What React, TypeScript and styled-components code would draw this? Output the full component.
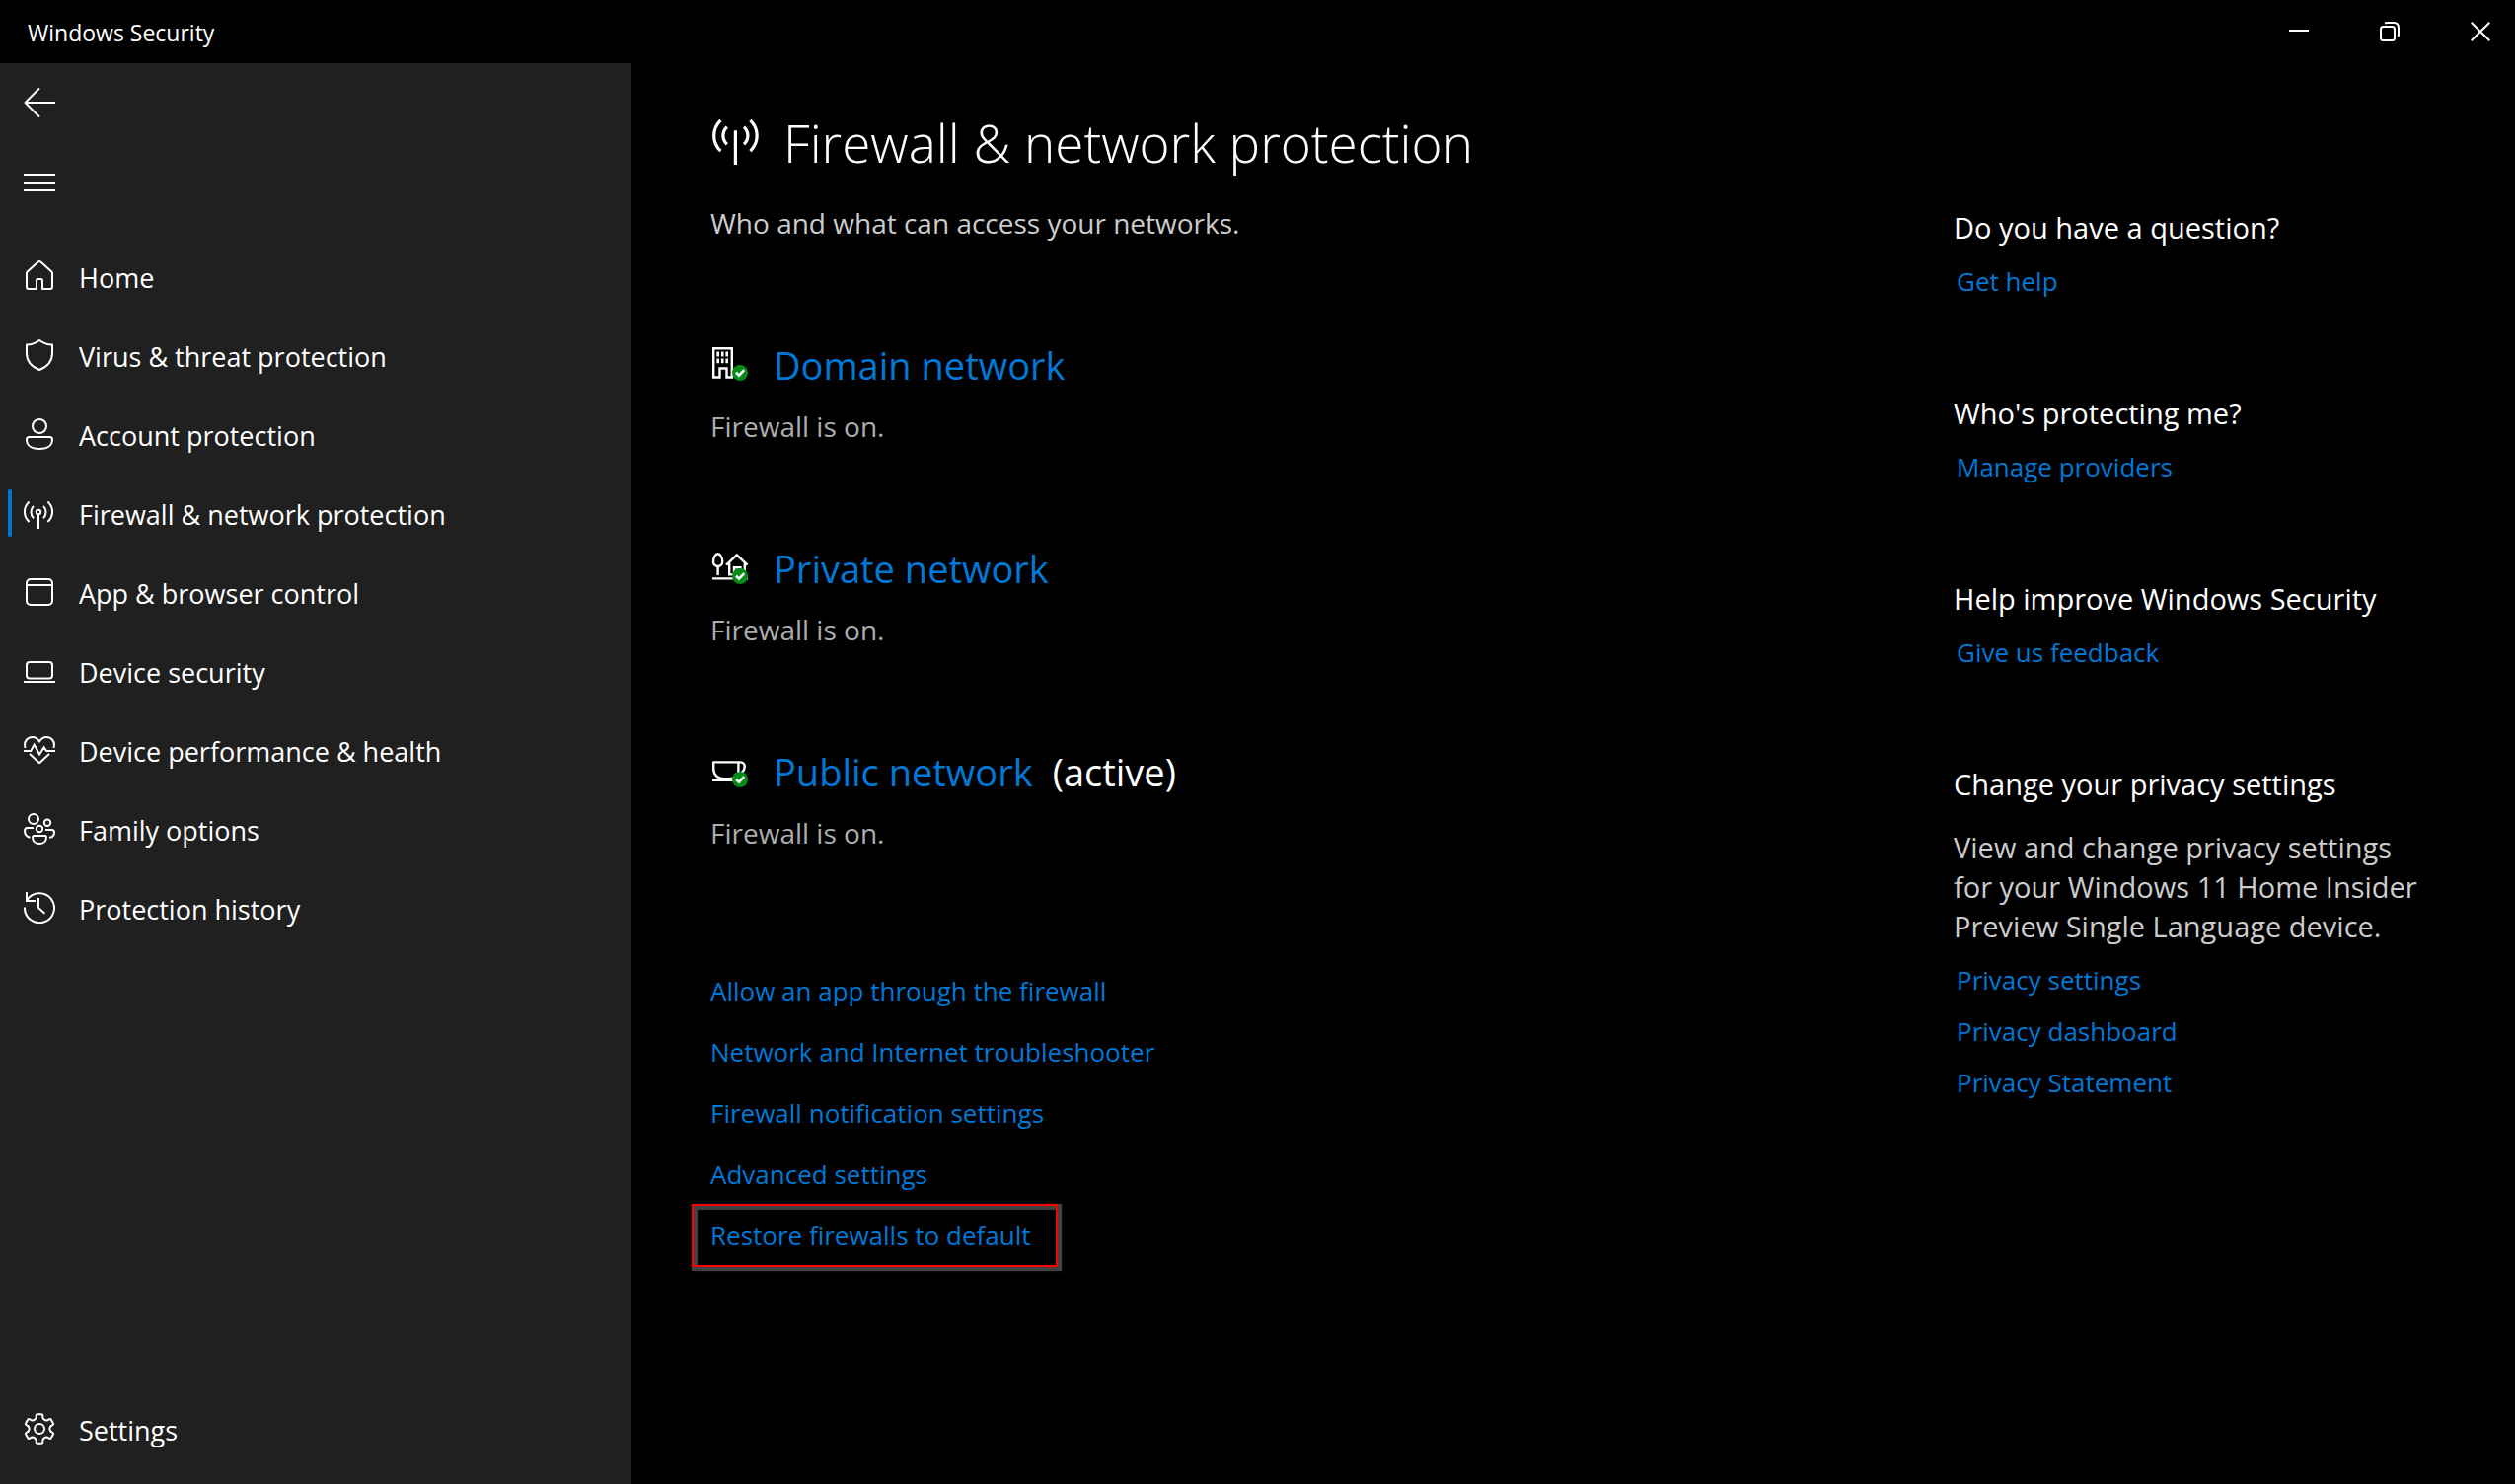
import React from "react";
import styled, { createGlobalStyle } from "styled-components";

const color = {
  window: "#000000",
  sidebar: "#202020",
  text: "#ffffff",
  soft: "#cccccc",
  muted: "#adadad",
  accent: "#0078d7",
  ok: "#078a18",
  marker: "#ff0000",
  markerShadow: "#424242",
};

const GlobalStyle = createGlobalStyle`
  *, *::before, *::after { box-sizing: border-box; }
  body {
    margin: 0;
    background: ${color.window};
    color: ${color.text};
    font-family: "Open Sans", "Noto Sans", sans-serif;
    font-size: 28px;
    line-height: 40px;
  }
  h1, h2, p, ul { margin: 0; padding: 0; font-weight: 400; }
  ul { list-style: none; }
`;

/* ---------- Shell ---------- */

const Window = styled.div`
  display: flex;
  flex-direction: column;
  min-height: 100vh;
`;

const TitleBar = styled.header`
  display: flex;
  align-items: center;
  justify-content: space-between;
  height: 64px;
  padding: 0 11px 0 28px;
`;

const WindowTitle = styled.span`
  padding-top: 2px;
  font-size: 23px;
`;

const WindowControls = styled.div`
  display: flex;
  gap: 44px;
`;

const IconButton = styled.button<{ $width: number; $height: number }>`
  display: flex;
  align-items: center;
  justify-content: center;
  width: ${(p) => p.$width}px;
  height: ${(p) => p.$height}px;
  padding: 0;
  border: 0;
  background: transparent;
  color: inherit;
`;

const Body = styled.div`
  display: flex;
  flex: 1;
`;

const Sidebar = styled.nav`
  display: flex;
  flex-direction: column;
  flex: 0 0 640px;
  padding-bottom: 16px;
  background: ${color.sidebar};
`;

const NavList = styled.ul`
  flex: 1;
  padding-top: 16px;
`;

const NavLink = styled.a`
  position: relative;
  display: flex;
  align-items: center;
  gap: 24px;
  height: 80px;
  padding-left: 24px;
  color: ${color.text};
  font-size: 27px;
  text-decoration: none;

  &[aria-current="page"]::before {
    content: "";
    position: absolute;
    left: 8px;
    top: 16px;
    width: 4px;
    height: 48px;
    border-radius: 2px;
    background: ${color.accent};
  }
`;

const NavLabel = styled.span`
  padding-top: 4px;
`;

const Svg = styled.svg`
  flex: none;
  fill: none;
  stroke: currentColor;
  stroke-width: 2;
  stroke-linecap: butt;
  stroke-linejoin: round;
`;

/* ---------- Content ---------- */

const Main = styled.main`
  display: flex;
  flex: 1;
  padding: 40px 80px;
`;

const Primary = styled.div`
  flex: 1;
`;

const PageTitle = styled.h1`
  display: flex;
  align-items: center;
  gap: 24px;
  height: 80px;
  font-size: 53px;
  font-weight: 300;
  line-height: 80px;
`;

const PageTitleText = styled.span`
  padding-top: 2px;
`;

const Subtitle = styled.p`
  margin-top: 22px;
  color: ${color.soft};
`;

const Network = styled.section`
  margin-top: 96px;
`;

const NetworkTitle = styled.h2`
  display: flex;
  align-items: center;
  font-size: 38px;
  line-height: 56px;
`;

const NetworkLink = styled.a`
  margin-left: 24px;
  color: ${color.accent};
  text-decoration: none;
`;

const NetworkState = styled.span`
  margin-left: 20px;
`;

const Status = styled.p`
  margin-top: 14px;
  color: ${color.muted};
`;

const LinkList = styled.ul<{ $gap: number; $top: number }>`
  display: flex;
  flex-direction: column;
  align-items: flex-start;
  gap: ${(p) => p.$gap}px;
  margin-top: ${(p) => p.$top}px;
`;

const TextLink = styled.a<{ $marked?: boolean }>`
  position: relative;
  display: block;
  color: ${color.accent};
  font-size: 26px;
  text-decoration: none;

  &::after {
    content: ${(p) => (p.$marked ? '""' : "none")};
    position: absolute;
    inset: -12px -28px -12px -19px;
    border: 2px solid ${color.marker};
    box-shadow: 2px 2px 1px 2px ${color.markerShadow},
      inset 4px 4px 1px ${color.markerShadow};
    pointer-events: none;
  }
`;

const Aside = styled.aside`
  display: flex;
  flex-direction: column;
  flex: 0 0 489px;
  gap: 94px;
  padding-top: 107px;
  font-size: 29px;
`;

const AsideTitle = styled.h2`
  font-size: 29px;
`;

const AsideLinks = styled(LinkList)`
  padding-left: 3px;
`;

const AsideText = styled.p`
  max-width: 480px;
  margin-top: 24px;
  color: ${color.soft};
`;

/* ---------- Icons ---------- */

const gearPath = (() => {
  const at = (deg: number, r: number) => {
    const a = (deg * Math.PI) / 180;
    return `${(16 + r * Math.cos(a)).toFixed(2)} ${(16 + r * Math.sin(a)).toFixed(2)}`;
  };
  let d = "";
  for (let i = 0; i < 6; i++) {
    const c = -90 + i * 60;
    d += `${i ? "L" : "M"}${at(c - 18, 11.4)} L${at(c - 13, 14.4)} Q${at(c - 12, 15.2)} ${at(c - 8, 15)} `;
    d += `L${at(c + 8, 15)} Q${at(c + 12, 15.2)} ${at(c + 13, 14.4)} L${at(c + 18, 11.4)} Q${at(c + 30, 9.6)} ${at(c + 42, 11.4)} `;
  }
  return d + "Z";
})();

const drawings = {
  back: <path d="M16 1.5 1.5 16 16 30.5M1.5 16H32" />,
  menu: <path d="M0 9H32M0 17H32M0 25H32" />,
  home: (
    <path d="M3 13.2Q3 12.2 3.7 11.5L14.7 1.6Q16 .5 17.3 1.6L28.3 11.5Q29 12.2 29 13.2V27Q29 29 27 29H19V20.5Q19 19 17.5 19H14.5Q13 19 13 20.5V29H5Q3 29 3 27Z" />
  ),
  shield: (
    <path d="M16 1C12 4 8 5.4 3 5.6V14C3 22.5 8.5 28 16 31C23.5 28 29 22.5 29 14V5.6C24 5.4 20 4 16 1Z" />
  ),
  account: (
    <>
      <circle cx="16" cy="8" r="7" />
      <path d="M5.5 19H26.5Q29 19 29 21.5C29 27.5 24 31 16 31S3 27.5 3 21.5Q3 19 5.5 19Z" />
    </>
  ),
  firewall: (
    <>
      <circle cx="15" cy="15" r="2.2" />
      <path d="M15 17V32M5.6 4.5C-.6 10 -.6 19.5 5.6 25M24.4 4.5C30.6 10 30.6 19.5 24.4 25M10 9C6.6 12 6.6 18 10 21.2M20 9C23.4 12 23.4 18 20 21.2" />
    </>
  ),
  app: (
    <>
      <rect x="3" y="3" width="26" height="26" rx="4" />
      <path d="M3 9H29" />
    </>
  ),
  device: (
    <>
      <rect x="3" y="7" width="26" height="16.5" rx="3" />
      <path d="M0 27H32" />
    </>
  ),
  health: (
    <>
      <path d="M1.6 14C-.6 6.6 4.6 3 9 3C12 3 14.2 4.6 16 7.6C17.8 4.6 20 3 23 3C27.4 3 32.6 6.6 30.4 14" />
      <path strokeLinejoin="miter" d="M0 17H7.2L10.7 10.6 16 20.6 20.6 13.4 23.2 17H32" />
      <path d="M6 20 16 29.2 26 20" />
    </>
  ),
  family: (
    <>
      <circle cx="10" cy="6" r="5" />
      <circle cx="24" cy="9.8" r="3.2" />
      <circle cx="16" cy="16" r="3.2" />
      <path d="M10 15H4Q1 15 1 18C1 21.5 3 24 6.5 24.8M22 17H28.5Q31 17 31 19.5C31 22.5 29 24.5 26 24.8M10.5 23H21.5Q23 23 23 24.5C23 28.5 20 31 16 31S9 28.5 9 24.5Q9 23 10.5 23Z" />
    </>
  ),
  history: (
    <path strokeLinejoin="miter" d="M1 15.5A15 15 0 1 0 3.4 8M3 0V9H12M15 6V16L21.4 21.8" />
  ),
  settings: (
    <>
      <path d={gearPath} />
      <circle cx="16" cy="16" r="5" />
    </>
  ),
};

type IconName = keyof typeof drawings;

const Icon = ({ name }: { name: IconName }) => (
  <Svg width="32" height="32" viewBox="0 0 32 32" aria-hidden="true">
    {drawings[name]}
  </Svg>
);

const networkDrawings = {
  domain: (
    <>
      <path strokeLinejoin="miter" d="M3.2 11.2H21.8V40.5H16.5V31.5H9.5V40.5H3.2Z" />
      <path
        fill="currentColor"
        stroke="none"
        d="M6.4 14.6h2.6v4.8h-2.6zM10.9 14.6h2.6v4.8h-2.6zM15.4 14.6h2.6v4.8h-2.6zM6.4 21.4h2.6v4.8h-2.6zM10.9 21.4h2.6v4.8h-2.6zM15.4 21.4h2.6v4.8h-2.6z"
      />
    </>
  ),
  private: (
    <>
      <path d="M7.6 13.2C10 13.2 12.2 17.4 12.2 21C12.2 24.2 10 26 7.6 26S3 24.2 3 21C3 17.4 5.2 13.2 7.6 13.2ZM7.6 26V35M2 38.4H38" />
      <path strokeLinejoin="miter" d="M16 24.6 26.8 14.4 37.6 24.6M19.2 22V34.4H24V27.2H30.4V34.4M34.8 22V34" />
    </>
  ),
  public: (
    <path d="M3.2 18.4H28.4V27C28.4 32.6 25 35.2 19 35.2H14C7.4 35.2 3.2 31 3.2 25ZM28.4 18.4H30C34 18.4 35.2 21 34.6 24C34 27.4 31.6 29.6 28.4 30M2 36.9H24" />
  ),
};

const NetworkIcon = ({ name }: { name: keyof typeof networkDrawings }) => (
  <Svg width="40" height="56" viewBox="0 0 40 56" aria-hidden="true">
    <g strokeWidth="2.4">{networkDrawings[name]}</g>
    <circle cx="30" cy="36" r="8" fill={color.ok} stroke="none" />
    <path d="M26 35.8 29 38.6 34.2 33.2" strokeWidth="2.6" strokeLinejoin="miter" />
  </Svg>
);

const TitleIcon = () => (
  <Svg width="50" height="48" viewBox="0 0 50 48" aria-hidden="true">
    <path
      strokeWidth="3.2"
      d="M25.4 12.3V47M10.4 1.8C1.4 10.6 1.4 24.4 10.4 33.2M40.4 1.8C49.4 10.6 49.4 24.4 40.4 33.2M16.8 8.6C11.6 13.6 11.6 21.4 16.8 26.2M34 8.6C39.2 13.6 39.2 21.4 34 26.2"
    />
  </Svg>
);

const ControlIcon = ({ d }: { d: string }) => (
  <Svg width="20" height="20" viewBox="0 0 20 20" aria-hidden="true">
    <path d={d} />
  </Svg>
);

/* ---------- Data ---------- */

const navItems: { icon: IconName; label: string; current?: boolean }[] = [
  { icon: "home", label: "Home" },
  { icon: "shield", label: "Virus & threat protection" },
  { icon: "account", label: "Account protection" },
  { icon: "firewall", label: "Firewall & network protection", current: true },
  { icon: "app", label: "App & browser control" },
  { icon: "device", label: "Device security" },
  { icon: "health", label: "Device performance & health" },
  { icon: "family", label: "Family options" },
  { icon: "history", label: "Protection history" },
];

const networks: { id: keyof typeof networkDrawings; label: string; active?: boolean }[] = [
  { id: "domain", label: "Domain network" },
  { id: "private", label: "Private network" },
  { id: "public", label: "Public network", active: true },
];

const actions = [
  { label: "Allow an app through the firewall" },
  { label: "Network and Internet troubleshooter" },
  { label: "Firewall notification settings" },
  { label: "Advanced settings" },
  { label: "Restore firewalls to default", marked: true },
];

const helpSections: { title: string; text?: string; links: string[] }[] = [
  { title: "Do you have a question?", links: ["Get help"] },
  { title: "Who's protecting me?", links: ["Manage providers"] },
  { title: "Help improve Windows Security", links: ["Give us feedback"] },
  {
    title: "Change your privacy settings",
    text: "View and change privacy settings for your Windows 11 Home Insider Preview Single Language device.",
    links: ["Privacy settings", "Privacy dashboard", "Privacy Statement"],
  },
];

const NavItem = ({ icon, label, current }: { icon: IconName; label: string; current?: boolean }) => (
  <NavLink href="#" aria-current={current ? "page" : undefined}>
    <Icon name={icon} />
    <NavLabel>{label}</NavLabel>
  </NavLink>
);

export default function App() {
  return (
    <Window>
      <GlobalStyle />
      <TitleBar>
        <WindowTitle>Windows Security</WindowTitle>
        <WindowControls>
          <IconButton $width={48} $height={64} aria-label="Minimize">
            <ControlIcon d="M0 9H20" />
          </IconButton>
          <IconButton $width={48} $height={64} aria-label="Restore">
            <ControlIcon d="M3.5 5H12.5Q15 5 15 7.5V16.5Q15 19 12.5 19H3.5Q1 19 1 16.5V7.5Q1 5 3.5 5ZM5 1.6Q6 1 7.5 1H14Q19 1 19 6V12.5Q19 14 18.4 15" />
          </IconButton>
          <IconButton $width={48} $height={64} aria-label="Close">
            <ControlIcon d="M.7 .7 19.3 19.3M19.3 .7 .7 19.3" />
          </IconButton>
        </WindowControls>
      </TitleBar>

      <Body>
        <Sidebar aria-label="Windows Security">
          <IconButton $width={80} $height={80} aria-label="Back">
            <Icon name="back" />
          </IconButton>
          <IconButton $width={80} $height={80} aria-label="Navigation menu">
            <Icon name="menu" />
          </IconButton>
          <NavList>
            {navItems.map((item) => (
              <li key={item.label}>
                <NavItem {...item} />
              </li>
            ))}
          </NavList>
          <NavItem icon="settings" label="Settings" />
        </Sidebar>

        <Main>
          <Primary>
            <PageTitle>
              <TitleIcon />
              <PageTitleText>Firewall &amp; network protection</PageTitleText>
            </PageTitle>
            <Subtitle>Who and what can access your networks.</Subtitle>

            {networks.map((network) => (
              <Network key={network.id}>
                <NetworkTitle>
                  <NetworkIcon name={network.id} />
                  <NetworkLink href="#">{network.label}</NetworkLink>
                  {network.active && <NetworkState>(active)</NetworkState>}
                </NetworkTitle>
                <Status>Firewall is on.</Status>
              </Network>
            ))}

            <LinkList $gap={22} $top={120}>
              {actions.map((action) => (
                <li key={action.label}>
                  <TextLink href="#" $marked={action.marked}>
                    {action.label}
                  </TextLink>
                </li>
              ))}
            </LinkList>
          </Primary>

          <Aside>
            {helpSections.map((section) => (
              <section key={section.title}>
                <AsideTitle>{section.title}</AsideTitle>
                {section.text && <AsideText>{section.text}</AsideText>}
                <AsideLinks $gap={12} $top={14}>
                  {section.links.map((link) => (
                    <li key={link}>
                      <TextLink href="#">{link}</TextLink>
                    </li>
                  ))}
                </AsideLinks>
              </section>
            ))}
          </Aside>
        </Main>
      </Body>
    </Window>
  );
}
